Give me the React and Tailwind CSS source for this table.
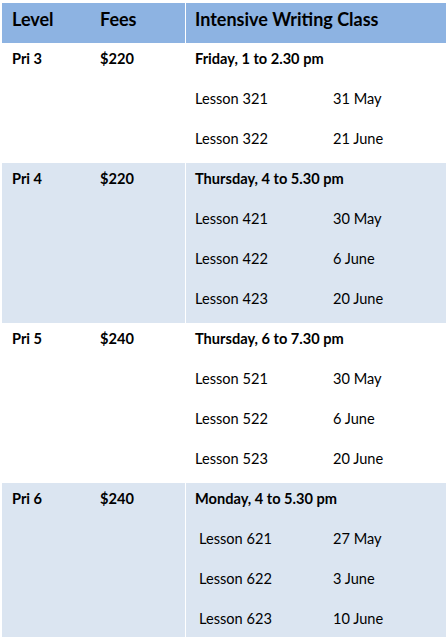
const rows = [
  { level: "Pri 3", fee: "$220", title: "Friday, 1 to 2.30 pm", shade: false, indent: false, lessons: [["Lesson 321", "31 May"], ["Lesson 322", "21 June"]] },
  { level: "Pri 4", fee: "$220", title: "Thursday, 4 to 5.30 pm", shade: true, indent: false, lessons: [["Lesson 421", "30 May"], ["Lesson 422", "6 June"], ["Lesson 423", "20 June"]] },
  { level: "Pri 5", fee: "$240", title: "Thursday, 6 to 7.30 pm", shade: false, indent: false, lessons: [["Lesson 521", "30 May"], ["Lesson 522", "6 June"], ["Lesson 523", "20 June"]] },
  { level: "Pri 6", fee: "$240", title: "Monday, 4 to 5.30 pm", shade: true, indent: true, lessons: [["Lesson 621", "27 May"], ["Lesson 622", "3 June"], ["Lesson 623", "10 June"]] },
];

export default function App() {
  return (
    <div className="bg-white w-[448px] min-h-[637px] pt-[3px] pl-[2px] text-black" style={{ fontFamily: "Lato, 'Open Sans', sans-serif" }}>
      <div className="w-[444px] flex flex-col">
        <div className="flex h-[40px] bg-[#8db3e2] text-[18px] font-bold">
          <div className="w-[183px] flex pt-[5px] leading-[22px]">
            <div className="w-[98px] pl-[10px]">Level</div>
            <div className="flex-1">Fees</div>
          </div>
          <div className="w-px bg-white"></div>
          <div className="flex-1 pl-[9px] pt-[5px] leading-[22px]">Intensive Writing Class</div>
        </div>
        {rows.map((r) => (
          <div key={r.level} className={`flex text-[14.6px] ${r.shade ? "bg-[#dbe5f1]" : "bg-white"}`}>
            <div className="w-[183px] flex font-bold pt-[6px] leading-[20px]">
              <div className="w-[98px] pl-[10px]">{r.level}</div>
              <div className="flex-1">{r.fee}</div>
            </div>
            <div className="w-px bg-white"></div>
            <div className="flex-1 pl-[9px] flex flex-col">
              <div className="h-[40px] pt-[6px] leading-[20px] font-bold">{r.title}</div>
              {r.lessons.map(([l, d]) => (
                <div key={l} className="h-[40px] pt-[6px] leading-[20px] flex">
                  <div className={`w-[138px] ${r.indent ? "pl-[4px]" : ""}`}>{l}</div>
                  <div>{d}</div>
                </div>
              ))}
            </div>
          </div>
        ))}
      </div>
    </div>
  );
}
